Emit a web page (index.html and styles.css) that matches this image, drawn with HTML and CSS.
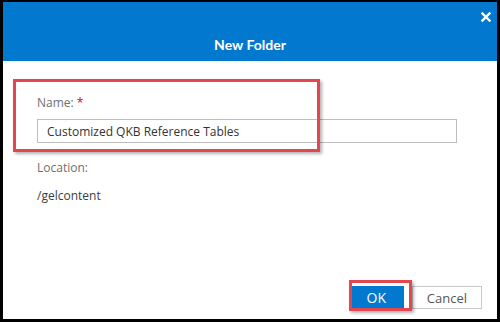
FILE: index.html
```html
<!DOCTYPE html>
<html lang="en">
<head>
    <meta charset="UTF-8">
    <meta name="viewport" content="width=device-width, initial-scale=1.0">
    <title>New Folder</title>
    <link rel="stylesheet" href="styles.css">
</head>
<body>
    <div class="frame">
        <div class="dialog">
            <div class="dialog-header">
                <div class="header-top">
                    <button type="button" class="close-btn" aria-label="Close">
                        <svg width="10" height="10" viewBox="0 0 10 10">
                            <path d="M1.5 1.5 L8.5 8.5 M8.5 1.5 L1.5 8.5" stroke="#fff" stroke-width="2.4" stroke-linecap="square"/>
                        </svg>
                    </button>
                </div>
                <h2 class="dialog-title">New Folder</h2>
            </div>

            <div class="dialog-body">
                <div class="form-group">
                    <label for="name">Name: <span class="required">*</span></label>
                    <input type="text" id="name" name="name" value="Customized QKB Reference Tables">
                </div>
                <div class="form-group">
                    <div class="field-label">Location:</div>
                    <div class="field-value">/gelcontent</div>
                </div>
            </div>

            <div class="dialog-footer">
                <button type="button" class="btn btn-primary">OK</button>
                <button type="button" class="btn">Cancel</button>
            </div>

            <!-- callout boxes drawn over the dialog -->
            <div class="callout callout-name"></div>
            <div class="callout callout-ok"></div>
        </div>
    </div>
</body>
</html>
```

FILE: styles.css
```css
body {
    margin: 0;
    font-family: "Open Sans", Arial, sans-serif;
    background: #000;
}
.frame {
    width: 500px;
    height: 322px;
    box-sizing: border-box;
    border-style: solid;
    border-color: #000;
    border-width: 2px 3px 3px 3px;
    background: #fff;
}
.dialog {
    position: relative;
    height: 100%;
    display: flex;
    flex-direction: column;
    background: #fff;
}
.dialog-header {
    height: 59px;
    background-color: #0378cf;
    display: flex;
    flex-direction: column;
}
.header-top {
    display: flex;
    justify-content: flex-end;
    padding: 9px 5px 0 0;
    height: 13px;
}
.close-btn {
    background: none;
    border: none;
    padding: 0;
    width: 12px;
    height: 12px;
    display: flex;
    align-items: center;
    justify-content: center;
    cursor: pointer;
}
.dialog-title {
    margin: 12px 0 0;
    color: #fff;
    font-family: Lato, "Open Sans", sans-serif;
    font-size: 14px;
    font-weight: bold;
    text-align: center;
}
.dialog-body {
    padding: 33px 0 0 34px;
}
.form-group {
    margin-bottom: 16px;
}
label,
.field-label {
    display: block;
    color: #6f6f6f;
    font-size: 12px;
    line-height: 18px;
    margin-bottom: 7px;
}
.required {
    color: #d0021b;
}
input[type="text"] {
    display: block;
    width: 420px;
    height: 24px;
    box-sizing: border-box;
    border: 1px solid #bdbdbd;
    border-radius: 0;
    padding: 0 9px;
    font-family: inherit;
    font-size: 12px;
    color: #333;
}
.field-value {
    color: #3d3d3d;
    font-size: 12px;
    line-height: 18px;
    margin-top: 10px;
}
.dialog-footer {
    margin-top: auto;
    display: flex;
    justify-content: flex-end;
    gap: 8px;
    padding: 0 15px 10px 0;
}
.btn {
    height: 23px;
    padding: 0 14px;
    background: #fff;
    border: 1px solid #c8c8c8;
    color: #555;
    font-family: inherit;
    font-size: 13px;
    cursor: pointer;
}
.btn-primary {
    width: 55px;
    background-color: #0378cf;
    border-color: #0378cf;
    color: #fff;
    font-size: 14px;
}
.callout {
    position: absolute;
    border: 3px solid #e3464e;
    box-shadow: 2px 2px 3px rgba(0, 0, 0, 0.3);
}
.callout-name {
    left: 10px;
    top: 77px;
    width: 301px;
    height: 67px;
}
.callout-ok {
    left: 346px;
    top: 278px;
    width: 57px;
    height: 25px;
}
```
